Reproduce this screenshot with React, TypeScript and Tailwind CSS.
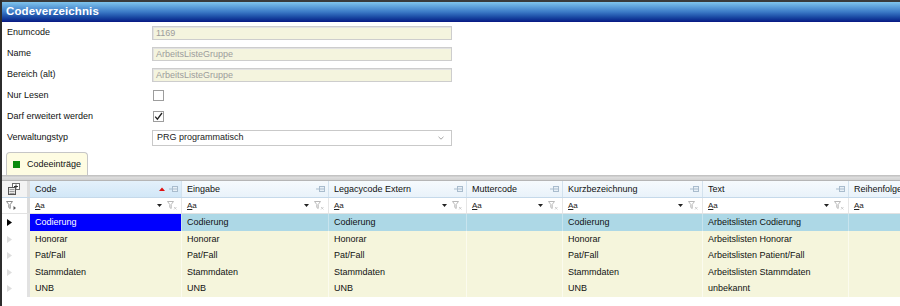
import React from 'react';

type Col = { key: string; title: string; w: string; sorted?: boolean };

const COLS: Col[] = [
    { key: 'code', title: 'Code', w: 'w-[152px]', sorted: true },
    { key: 'eingabe', title: 'Eingabe', w: 'w-[147px]' },
    { key: 'legacy', title: 'Legacycode Extern', w: 'w-[138px]' },
    { key: 'mutter', title: 'Muttercode', w: 'w-[96px]' },
    { key: 'kurz', title: 'Kurzbezeichnung', w: 'w-[140px]' },
    { key: 'text', title: 'Text', w: 'w-[146px]' },
    { key: 'reihe', title: 'Reihenfolge', w: 'w-[100px]' },
];

const ROWS: Record<string, string>[] = [
    { code: 'Codierung', eingabe: 'Codierung', legacy: 'Codierung', mutter: '', kurz: 'Codierung', text: 'Arbeitslisten Codierung', reihe: '' },
    { code: 'Honorar', eingabe: 'Honorar', legacy: 'Honorar', mutter: '', kurz: 'Honorar', text: 'Arbeitslisten Honorar', reihe: '' },
    { code: 'Pat/Fall', eingabe: 'Pat/Fall', legacy: 'Pat/Fall', mutter: '', kurz: 'Pat/Fall', text: 'Arbeitslisten Patient/Fall', reihe: '' },
    { code: 'Stammdaten', eingabe: 'Stammdaten', legacy: 'Stammdaten', mutter: '', kurz: 'Stammdaten', text: 'Arbeitslisten Stammdaten', reihe: '' },
    { code: 'UNB', eingabe: 'UNB', legacy: 'UNB', mutter: '', kurz: 'UNB', text: 'unbekannt', reihe: '' },
];

const ROW_H = ['h-[17px]', 'h-[16px]', 'h-[17px]', 'h-[16px]', 'h-[17px]'];

const PinIcon = () => (
    <svg width="9" height="6" viewBox="0 0 9 6" className="shrink-0">
        <path d="M0 3h3" stroke="#a9bccd" strokeWidth="1" />
        <rect x="3.5" y="0.5" width="5" height="5" fill="#e8f0f7" stroke="#a9bccd" />
        <path d="M4 3h4" stroke="#a9bccd" strokeWidth="1" />
    </svg>
);

const FilterClearIcon = () => (
    <svg width="10" height="9" viewBox="0 0 10 9" className="shrink-0">
        <path d="M0.5 0.5h6l-2.3 3v4l-1.4-1v-3z" fill="none" stroke="#b9b9b9" />
        <path d="M7 6l2.5 2.5M9.5 6L7 8.5" stroke="#c4c4c4" strokeWidth="0.8" />
    </svg>
);

const FormRow = ({ label, children }: { label: string; children: React.ReactNode }) => (
    <div className="h-[21px] flex items-center">
        <div className="w-[150px] pl-[5px] text-[#111]">{label}</div>
        {children}
    </div>
);

const ReadField = ({ value }: { value: string }) => (
    <div className="w-[300px] h-[14px] bg-[#f4f4de] border border-[#cdcdcd] shadow-[inset_1px_1px_0_#e2e2e2] pl-[3px] text-[#9c9c9c] leading-[12px]">
        {value}
    </div>
);

const Check = ({ checked }: { checked?: boolean }) => (
    <div className="ml-[1px] w-[11px] h-[11px] border border-[#9d9d9d] bg-white flex items-center justify-center">
        {checked && (
            <svg width="9" height="9" viewBox="0 0 9 9">
                <path d="M1.2 4.6l2.2 2.6L8 1" fill="none" stroke="#222" strokeWidth="1.3" />
            </svg>
        )}
    </div>
);

export default function App() {
    return (
        <div className="w-[900px] h-[306px] overflow-hidden bg-white border-l-2 border-[#2c2c2c] font-['Liberation_Sans',Arial,sans-serif] text-[9px] leading-none">
            {/* title bar */}
            <div className="h-[22px] border-t-2 border-[#3a3a3a] bg-gradient-to-b from-[#80c4ec] via-[#3b79c6] to-[#0a1683] flex items-center pl-[4px]">
                <span className="text-white font-bold text-[11.5px] tracking-[0.1px]">Codeverzeichnis</span>
            </div>

            {/* form */}
            <div className="flex flex-col">
                <FormRow label="Enumcode"><ReadField value="1169" /></FormRow>
                <FormRow label="Name"><ReadField value="ArbeitsListeGruppe" /></FormRow>
                <FormRow label="Bereich (alt)"><ReadField value="ArbeitsListeGruppe" /></FormRow>
                <FormRow label="Nur Lesen"><Check /></FormRow>
                <FormRow label="Darf erweitert werden"><Check checked /></FormRow>
                <FormRow label="Verwaltungstyp">
                    <div className="w-[300px] h-[16px] border border-[#c9c9c9] bg-white flex items-center pl-[4px] pr-[7px] text-[#1a1a1a]">
                        <span>PRG programmatisch</span>
                        <svg width="6" height="4" viewBox="0 0 6 4" className="ml-auto">
                            <path d="M0.5 0.8l2.5 2.4 2.5-2.4" fill="none" stroke="#9a9a9a" strokeWidth="0.9" />
                        </svg>
                    </div>
                </FormRow>
            </div>

            {/* tab */}
            <div className="pt-[4px] pl-[4px] flex">
                <div className="h-[23px] w-[82px] bg-[#fefce2] border border-b-0 border-[#c6c6c6] rounded-t-[4px] flex items-center pl-[6px] gap-[7px] text-[#111]">
                    <div className="w-[7px] h-[7px] bg-[#0b8b0b]" />
                    <span>Codeeinträge</span>
                </div>
            </div>
            <div className="h-[6px] bg-gradient-to-b from-[#bdbdbd] via-[#dcdcdc] to-[#d2d2d2] border-b border-[#b5b5b5]" />

            {/* grid */}
            <div className="flex flex-col">
                {/* header */}
                <div className="flex h-[17px] border-b border-[#c5d9ea]">
                    <div className="w-[28px] shrink-0 bg-[#f3f3f3] border-r-[3px] border-[#dcdcdc] flex items-center pl-[6px]">
                        <svg width="12" height="12" viewBox="0 0 12 12">
                            <rect x="4.5" y="0.5" width="7" height="6" fill="#fff" stroke="#6a6a6a" />
                            <path d="M8 1.5v4M6 3.5h4" stroke="#333" />
                            <rect x="0.5" y="4.5" width="7" height="7" fill="#e8e8e8" stroke="#555" />
                            <path d="M1.5 6.5h5M1.5 8.5h5M1.5 10.5h5" stroke="#888" strokeWidth="0.8" />
                        </svg>
                    </div>
                    {COLS.map((c) => (
                        <div
                            key={c.key}
                            className={`${c.w} shrink-0 flex items-center pl-[5px] pr-[3px] border-r border-[#d3e2ee] text-[#111] ${c.sorted ? 'bg-gradient-to-b from-[#e4f1fb] to-[#d2e7f7]' : 'bg-gradient-to-b from-[#f6fafd] to-[#e9f2fa]'}`}
                        >
                            <span className="whitespace-nowrap">{c.title}</span>
                            <div className="ml-auto flex items-center gap-[4px]">
                                {c.sorted && (
                                    <svg width="6" height="4" viewBox="0 0 6 4">
                                        <path d="M0 4L3 0.5 6 4z" fill="#e01010" />
                                    </svg>
                                )}
                                {c.key !== 'reihe' && <PinIcon />}
                            </div>
                        </div>
                    ))}
                </div>

                {/* filter row */}
                <div className="flex h-[16px] border-b border-[#e2e2e2]">
                    <div className="w-[28px] shrink-0 bg-white border-r-[3px] border-[#dcdcdc] flex items-center pl-[4px]">
                        <svg width="11" height="9" viewBox="0 0 11 9">
                            <path d="M0.5 0.5h6l-2.3 3v4l-1.4-1v-3z" fill="none" stroke="#8a8a8a" />
                            <path d="M7.5 5l2.5 2-2.5 2z" fill="#555" />
                        </svg>
                    </div>
                    {COLS.map((c) => (
                        <div key={c.key} className={`${c.w} shrink-0 flex items-center pl-[5px] pr-[4px] border-r border-[#e6e6e6] bg-white text-[#222]`}>
                            <span className="text-[8px]"><span className="underline">A</span>a</span>
                            {c.key !== 'reihe' && (
                                <div className="ml-auto flex items-center gap-[5px]">
                                    <svg width="5" height="3" viewBox="0 0 5 3">
                                        <path d="M0 0h5L2.5 3z" fill="#222" />
                                    </svg>
                                    <FilterClearIcon />
                                </div>
                            )}
                        </div>
                    ))}
                </div>

                {/* data rows */}
                {ROWS.map((r, i) => (
                    <div key={i} className={`flex ${ROW_H[i]}`}>
                        <div className="w-[28px] shrink-0 bg-white border-r-[3px] border-[#e2e2e2] flex items-center pl-[5px]">
                            <svg width="5" height="7" viewBox="0 0 5 7">
                                <path d="M0 0l5 3.5L0 7z" fill={i === 0 ? '#000' : '#dedede'} />
                            </svg>
                        </div>
                        {COLS.map((c, j) => {
                            const selected = i === 0 && j === 0;
                            const bg = selected ? 'bg-[#0000ff] text-white' : i === 0 ? 'bg-[#add8e6] text-[#111]' : 'bg-[#f5f5dc] text-[#111]';
                            return (
                                <div
                                    key={c.key}
                                    className={`${c.w} shrink-0 flex items-center pl-[5px] border-r ${i === 0 ? 'border-[#c8e4ee]' : 'border-[#fbfbee]'} ${bg} whitespace-nowrap`}
                                >
                                    {r[c.key]}
                                </div>
                            );
                        })}
                    </div>
                ))}
            </div>
        </div>
    );
}
